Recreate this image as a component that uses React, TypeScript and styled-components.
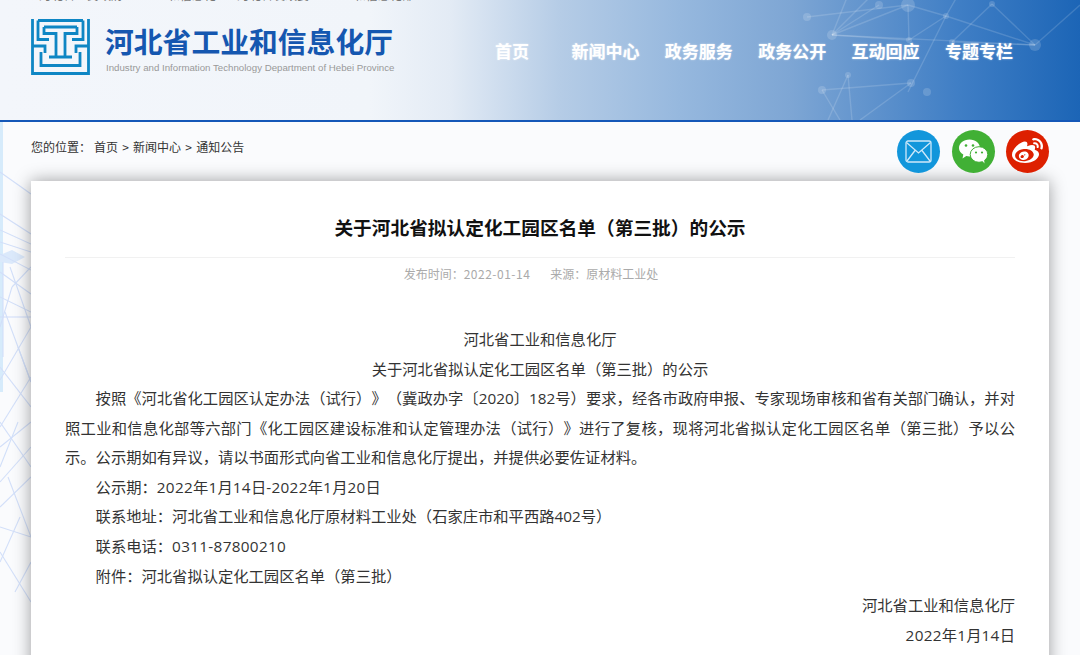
import React from 'react';
import styled, { createGlobalStyle } from 'styled-components';
import { FaWeibo } from 'react-icons/fa';

const GlobalStyle = createGlobalStyle`
    html, body {
        margin: 0;
        height: 100%;
        overflow: hidden;
        background: #fafbfd;
        font-family: "Noto Sans CJK SC", "Liberation Sans", sans-serif;
        text-spacing-trim: space-all;
    }
`

const Page = styled.div`
    position: relative;
    width: 1080px;
    height: 655px;
    overflow: hidden;
`

const Header = styled.header`
    position: relative;
    height: 120px;
    border-bottom: 2px solid #1457b8;
    background: linear-gradient(90deg, #f3f6fb 0, #f1f5fa 370px, #e3ebf5 450px, #b5cce6 560px, #96b8de 680px, #7ea6d4 790px, #3f7ec5 960px, #1c65b6 1080px);
`

const HeaderNet = styled.svg`
    position: absolute;
    top: 0;
    right: 0;
`

const TopStrip = styled.div`
    height: 2px;
    padding-left: 39px;
    display: flex;
    gap: 21px;
    align-items: flex-end;
    overflow: hidden;
    font-size: 12px;
    line-height: 14px;
    color: #777;
`

const HeaderRow = styled.div`
    position: relative;
    display: flex;
    align-items: flex-start;
    padding: 17px 67px 0 31px;
`

const Brand = styled.div`
    display: flex;
    gap: 15px;
`

const BrandTitle = styled.div`
    font-size: 28.8px;
    font-weight: 700;
    line-height: 44px;
    color: #1557b0;
    white-space: nowrap;
`

const BrandSub = styled.div`
    padding-left: 1px;
    font-family: "Liberation Sans", sans-serif;
    font-size: 9.7px;
    line-height: 10px;
    color: #999;
    white-space: nowrap;
`

const Nav = styled.nav`
    margin-left: auto;
    display: flex;
    gap: 25.4px;
`

const NavItem = styled.a`
    min-width: 68px;
    text-align: center;
    font-size: 17px;
    font-weight: 700;
    line-height: 64px;
    color: #fff;
    text-shadow: 0 0 2px rgba(255, 255, 255, 0.6);
    white-space: nowrap;
`

const SideNet = styled.svg`
    position: absolute;
    top: 122px;
    left: 0;
`

const Main = styled.main`
    position: relative;
    padding: 0 31px;
`

const CrumbRow = styled.div`
    height: 51px;
    padding-top: 8px;
    display: flex;
    justify-content: space-between;
    align-items: flex-start;
`

const Crumbs = styled.div`
    font-size: 12px;
    line-height: 34px;
    color: #333;
`

const CrumbLabel = styled.span`
    margin-right: 3px;
`

const CrumbSep = styled.span`
    margin: 0 1.5px;
`

const Share = styled.div`
    display: flex;
    gap: 11.5px;
`

const ShareButton = styled.a<{ $color: string }>`
    width: 43px;
    height: 43px;
    border-radius: 50%;
    background: ${({ $color }) => $color};
    color: #fff;
    display: flex;
    align-items: center;
    justify-content: center;
    font-size: 31px;
`

const Card = styled.article`
    background: #fff;
    box-shadow: 0 0 16px rgba(0, 0, 0, 0.38);
    padding: 26px 34px 40px;
`

const Title = styled.h1`
    margin: 0;
    padding-bottom: 10px;
    border-bottom: 1px solid #f1f1f1;
    text-align: center;
    font-size: 18.7px;
    font-weight: 700;
    line-height: 40px;
    color: #111;
`

const Meta = styled.div`
    margin-top: 6px;
    padding-right: 18px;
    display: flex;
    justify-content: center;
    gap: 20px;
    font-size: 12px;
    line-height: 20px;
    color: #aaa;
`

const MetaDate = styled.span`
    letter-spacing: 0.5px;
`

const Body = styled.div`
    margin-top: 41px;
    font-family: "Open Sans", "Noto Sans CJK SC", sans-serif;
    font-size: 15.3px;
    line-height: 29.58px;
    color: #333;
`

const Para = styled.p<{ $align?: string; $indent?: boolean }>`
    margin: 0;
    text-align: ${({ $align }) => $align || 'justify'};
    text-indent: ${({ $indent }) => ($indent ? '2em' : '0')};
`

const Num = styled.span`
    letter-spacing: 0.32px;
`

const netNodes = [
    [832, 35, 5], [908, 5, 7], [946, 16, 3], [992, 4, 3], [1035, 45, 6], [952, 42, 3], [909, 40, 3],
    [807, 17, 4], [879, 5, 4], [822, 90, 4], [911, 83, 4], [848, 75, 3], [927, 92, 4],
];

const netLines = [
    [832, 35, 908, 5], [832, 35, 909, 40], [832, 35, 1035, 45], [832, 35, 848, -5], [832, 35, 872, -5], [832, 35, 879, 5],
    [908, 5, 946, 16], [946, 16, 1035, 45], [946, 16, 908, 92], [908, 5, 909, 40], [992, 4, 1035, 45], [992, 4, 952, 42],
    [952, 42, 1035, 45], [1035, 45, 1080, 5], [946, 16, 958, -5], [909, 40, 946, 16], [807, 17, 908, 5],
    [822, 90, 911, 83], [822, 90, 840, 120], [848, 75, 828, 120], [848, 75, 852, 120], [911, 83, 860, 120],
];

const sideLines = [
    [0, 50, 31, 72], [0, 92, 31, 112], [0, 108, 31, 122], [0, 120, 31, 130], [0, 132, 31, 148], [0, 150, 31, 172],
    [10, 145, 31, 205], [0, 205, 12, 165], [12, 165, 31, 145], [0, 175, 31, 190], [0, 195, 31, 195], [5, 190, 31, 260],
    [0, 258, 31, 205], [0, 245, 31, 285], [0, 305, 31, 255], [0, 325, 31, 300], [0, 300, 31, 345], [0, 360, 31, 325],
    [0, 385, 31, 355], [8, 355, 31, 415], [0, 405, 31, 415], [0, 440, 20, 395], [0, 430, 31, 480], [15, 470, 31, 440],
    [18, 300, 0, 345], [18, 225, 31, 260], [3, 140, 3, 235],
];

const HeaderBackdrop = () => (
    <HeaderNet width="300" height="120" viewBox="780 0 300 120">
        {netLines.map(([x1, y1, x2, y2], i) => (
            <line key={i} x1={x1} y1={y1} x2={x2} y2={y2} stroke="#fff" strokeOpacity="0.15" strokeWidth="1.4" />
        ))}
        {netNodes.map(([cx, cy, r], i) => (
            <circle key={i} cx={cx} cy={cy} r={r} fill="#fff" fillOpacity="0.16" />
        ))}
    </HeaderNet>
);

const SideBackdrop = () => (
    <SideNet width="31" height="533" viewBox="0 0 31 533">
        <rect x="0" y="0" width="3" height="270" fill="#d6ebfb" />
        <polygon points="0,133 12,128 25,135 12,142 0,140" fill="#dbe9fb" />
        {sideLines.map(([x1, y1, x2, y2], i) => (
            <line key={i} x1={x1} y1={y1} x2={x2} y2={y2} stroke="#d2dff9" strokeWidth="1.1" />
        ))}
    </SideNet>
);

const Emblem = () => (
    <svg width="59" height="56" viewBox="0 0 59 56" fill="none" stroke="#0e86c4" strokeWidth="2.8">
        <path d="M1.500 0V54.500H57.500V0" />
        <path d="M7 1.500H52M7 1.500V20.500H18M52 1.500V20.500H41" />
        <path d="M13 8H46M13 8V14.500H25V38M46 8V14.500H34V38M18 38H41" />
        <path d="M1.500 27H14V34M57.500 27H45V34" />
        <path d="M10 33V46.500H49V33" />
    </svg>
);

const MailIcon = () => (
    <svg width="27" height="23" viewBox="0 0 27 23" fill="none" stroke="#cfe9fa" strokeWidth="1.3">
        <rect x="1" y="1" width="25" height="21" rx="2" />
        <path d="M1.500 2.500L13.500 13L25.500 2.500M2 21L10 10.500M25 21L17 10.500" />
    </svg>
);

const WechatIcon = () => (
    <svg width="30" height="25" viewBox="0 0 30 25">
        <path d="M11.500 0.500C17.600 0.500 22 4.300 22 9C22 13.700 17.600 17.500 11.500 17.500C10.300 17.500 9.300 17.300 8.300 17L4.500 19.500L5.300 15.500C2.600 14 1 11.700 1 9C1 4.300 5.400 0.500 11.500 0.500Z" fill="#fff" />
        <ellipse cx="21" cy="15.500" rx="8.800" ry="7.800" fill="#fff" stroke="#41b035" strokeWidth="1" />
        <path d="M24.500 22L26.500 24.500L26 20Z" fill="#fff" />
        <circle cx="8" cy="6.500" r="1.300" fill="#41b035" />
        <circle cx="15" cy="6.500" r="1.300" fill="#41b035" />
        <circle cx="18" cy="13.500" r="1.100" fill="#41b035" />
        <circle cx="24" cy="13.500" r="1.100" fill="#41b035" />
    </svg>
);

const navItems = ['首页', '新闻中心', '政务服务', '政务公开', '互动回应', '专题专栏'];

const App = () => {
    return (
        <Page>
            <GlobalStyle />
            <Header>
                <HeaderBackdrop />
                <TopStrip>
                    <span>河北省人民政府</span>
                    <span>工业和信息化</span>
                    <span>河北省发改委</span>
                    <span>工业和信息化部</span>
                </TopStrip>
                <HeaderRow>
                    <Brand>
                        <Emblem />
                        <div>
                            <BrandTitle>河北省工业和信息化厅</BrandTitle>
                            <BrandSub>Industry and Information Technology Department of Hebei Province</BrandSub>
                        </div>
                    </Brand>
                    <Nav>
                        {navItems.map((item) => (
                            <NavItem key={item}>{item}</NavItem>
                        ))}
                    </Nav>
                </HeaderRow>
            </Header>
            <SideBackdrop />
            <Main>
                <CrumbRow>
                    <Crumbs>
                        <CrumbLabel>您的位置：</CrumbLabel>首页 <CrumbSep>&gt;</CrumbSep> 新闻中心 <CrumbSep>&gt;</CrumbSep> 通知公告
                    </Crumbs>
                    <Share>
                        <ShareButton $color="#1296db"><MailIcon /></ShareButton>
                        <ShareButton $color="#41b035"><WechatIcon /></ShareButton>
                        <ShareButton $color="#dd2000"><FaWeibo /></ShareButton>
                    </Share>
                </CrumbRow>
                <Card>
                    <Title>关于河北省拟认定化工园区名单（第三批）的公示</Title>
                    <Meta>
                        <span>发布时间：<MetaDate>2022-01-14</MetaDate></span>
                        <span>来源：原材料工业处</span>
                    </Meta>
                    <Body>
                        <Para $align="center">河北省工业和信息化厅</Para>
                        <Para $align="center">关于河北省拟认定化工园区名单（第三批）的公示</Para>
                        <Para $indent>按照《河北省化工园区认定办法（试行）》（冀政办字〔2020〕182号）要求，经各市政府申报、专家现场审核和省有关部门确认，并对照工业和信息化部等六部门《化工园区建设标准和认定管理办法（试行）》进行了复核，现将河北省拟认定化工园区名单（第三批）予以公示。公示期如有异议，请以书面形式向省工业和信息化厅提出，并提供必要佐证材料。</Para>
                        <Para $indent>公示期：<Num>2022</Num>年<Num>1</Num>月<Num>14</Num>日<Num>-2022</Num>年<Num>1</Num>月<Num>20</Num>日</Para>
                        <Para $indent>联系地址：河北省工业和信息化厅原材料工业处（石家庄市和平西路402号）</Para>
                        <Para $indent>联系电话：<Num>0311-87800210</Num></Para>
                        <Para $indent>附件：河北省拟认定化工园区名单（第三批）</Para>
                        <Para $align="right">河北省工业和信息化厅</Para>
                        <Para $align="right"><Num>2022</Num>年<Num>1</Num>月<Num>14</Num>日</Para>
                    </Body>
                </Card>
            </Main>
        </Page>
    );
};

export default App;
